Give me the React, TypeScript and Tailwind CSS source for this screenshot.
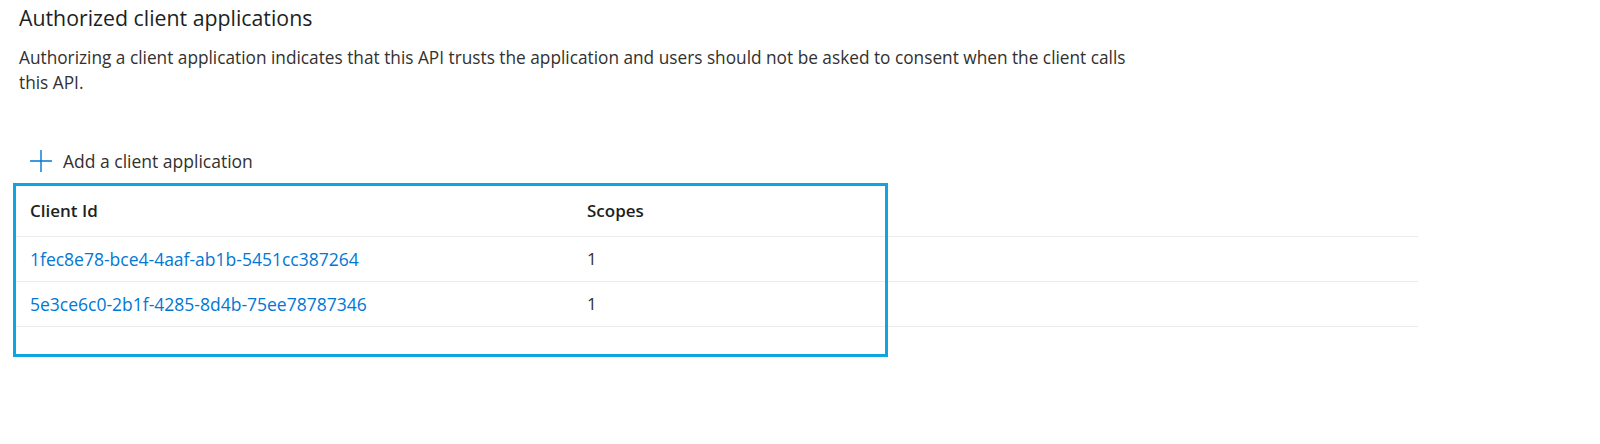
import React from 'react'

const clients = [
  { id: '1fec8e78-bce4-4aaf-ab1b-5451cc387264', scopes: 1 },
  { id: '5e3ce6c0-2b1f-4285-8d4b-75ee78787346', scopes: 1 },
]

const PlusIcon = () => (
  <svg width="22" height="22" viewBox="0 0 22 22" className="shrink-0">
    <path d="M11 0 V22 M0 11 H22" stroke="#0078d4" strokeWidth="1.4" fill="none" />
  </svg>
)

export default function App() {
  return (
    <div
      className="w-[1600px] h-[444px] bg-white px-4 text-[#323130]"
      style={{ fontFamily: '"Open Sans", "Noto Sans", sans-serif' }}
    >
      {/* Section header */}
      <h2 className="ml-[3px] pt-[2px] text-[21.3px] leading-[32px] text-[#201f1e]">
        Authorized client applications
      </h2>
      <p className="ml-[3px] mt-[11px] w-[1125px] text-[17.25px] leading-[25px]">
        Authorizing a client application indicates that this API trusts the application and users should not be asked
        to consent when the client calls this API.
      </p>

      {/* Command */}
      <button className="mt-[54px] ml-[14px] flex items-center gap-[11px] h-[24px] text-[17.5px] text-[#323130]">
        <PlusIcon />
        <span>Add a client application</span>
      </button>

      {/* Table */}
      <div className="relative mt-[13px] w-[1402px]">
        <div className="flex h-[51px] items-center border-b border-[#edebe9] text-[17px] font-semibold text-[#201f1e]">
          <div className="w-[557px] pl-[14px]">Client Id</div>
          <div className="pl-[14px]">Scopes</div>
        </div>
        {clients.map((c) => (
          <div key={c.id} className="flex h-[45px] items-center border-b border-[#edebe9] text-[17px]">
            <div className="w-[557px] pl-[14px]">
              <a className="text-[17.5px] text-[#0078d4] cursor-pointer">{c.id}</a>
            </div>
            <div className="pl-[14px]">{c.scopes}</div>
          </div>
        ))}

        {/* highlight annotation */}
        <div className="absolute left-[-3px] top-[-3px] w-[875px] h-[174px] border-[3px] border-[#0ea5e0] pointer-events-none" />
      </div>
    </div>
  )
}
